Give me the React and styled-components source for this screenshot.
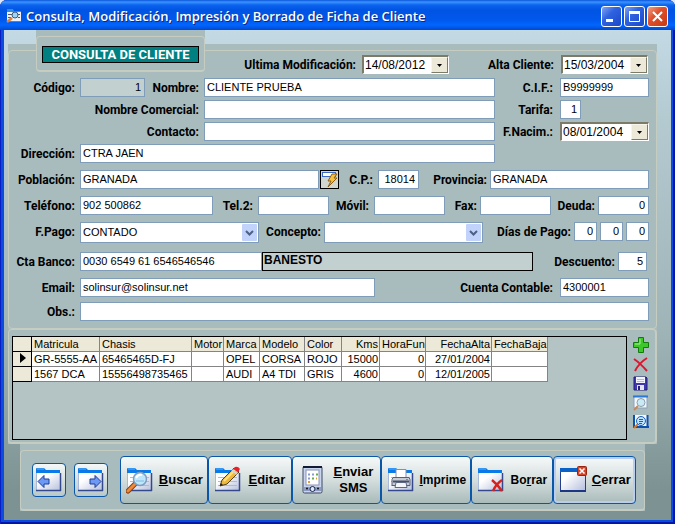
import React, { useState } from 'react';
import styled, { createGlobalStyle } from 'styled-components';

const GlobalStyle = createGlobalStyle`
  * {
    box-sizing: border-box;
  }
  body {
    margin: 0;
    background: #dfe6f5;
  }
  input, select, button {
    font: inherit;
    color: inherit;
    margin: 0;
    min-width: 0;
  }
`;

const fieldFont = "11px 'Liberation Sans', sans-serif";
const labelFont = "bold 12px Roboto, 'Liberation Sans', sans-serif";

const Window = styled.div`
  display: flex;
  flex-direction: column;
  min-height: 100vh;
  border-radius: 7px 7px 0 0;
  background: #0b4be0;
  box-shadow: inset 1px 0 #0a1fc0, inset -2px 0 #0016a8, inset 0 -2px #0016a8;
  padding: 0 4px 4px;
  font: ${fieldFont};
  color: #000;
`;

const TitleBar = styled.header`
  display: flex;
  align-items: center;
  gap: 4px;
  height: 30px;
  margin: 0 -4px;
  padding: 2px 7px 0 6px;
  border-radius: 7px 7px 0 0;
  background: linear-gradient(#0a55d8 0, #3a94ff 2px, #0c63ee 5px, #0054e3 10px, #0058ec 20px, #0066ff 25px, #0048d0 30px);
`;

const Title = styled.h1`
  flex: 1;
  margin: 0;
  font: 600 13px 'Open Sans', 'Noto Sans', sans-serif;
  color: #fff;
  text-shadow: 1px 1px #0a2a88;
  white-space: nowrap;
`;

const Controls = styled.div`
  display: flex;
  gap: 2px;
`;

const ControlButton = styled.button`
  width: 21px;
  height: 21px;
  padding: 0;
  border: 1px solid #fff;
  border-radius: 3px;
  background: ${(props) => (props.$close
    ? 'linear-gradient(135deg, #f0a088, #e0502c 40%, #c83a12)'
    : 'linear-gradient(135deg, #7fa4f4, #2f62e0 40%, #1c48c8)')};

  svg {
    display: block;
  }
`;

const Client = styled.main`
  flex: 1;
  padding: 0 14px 9px 4px;
  background: linear-gradient(#c3dae5 0, #b4cad1 90px, #9fb4b7 300px, #7d9393 460px);
`;

const Panel = styled.section`
  background: #a9bcbd;
  margin-top: ${(props) => props.$top || 0}px;
  padding-top: ${(props) => (props.$flush ? 0 : 6)}px;
`;

const Frame = styled.div`
  border: 1px solid #c6ccc0;
  border-radius: 4px;
`;

const FormFrame = styled(Frame)`
  padding: 0 7px 6px 1px;
`;

const Row = styled.div`
  display: grid;
  grid-template-columns: ${(props) => props.$cols};
  align-items: start;
  margin-top: ${(props) => props.$gap || 3}px;
`;

const TitleFrame = styled.div`
  background: #a9bcbd;
  margin: -25px 0 0 26px;
  padding-top: 6px;
`;

const TitleInner = styled(Frame)`
  border-width: 1px 1px 2px;
  padding: 9px 5px 7px;
`;

const Heading = styled.h2`
  margin: 0;
  border: 1px solid #000;
  background: #008080;
  color: #fff;
  font: ${labelFont};
  font-size: 13px;
  line-height: 15px;
  text-align: center;
  white-space: nowrap;
`;

const Label = styled.label`
  font: ${labelFont};
  line-height: 20px;
  text-align: right;
  white-space: nowrap;
  padding-right: ${(props) => props.$pad || 5}px;
`;

const Field = styled.input`
  width: 100%;
  height: 19px;
  border: 1px solid #7f9db9;
  background: ${(props) => (props.readOnly ? '#c3d0d0' : '#fff')};
  padding: 0 3px 1px 2px;
  text-align: ${(props) => (props.$right ? 'right' : 'left')};
  outline: none;
`;

const BankName = styled(Field)`
  border-color: #000;
  padding: 0 2px 3px 1px;
  font: bold 12px 'Liberation Sans', sans-serif;
`;

const DateBox = styled.div`
  display: flex;
  height: 19px;
  border: 1px solid #fff;
  border-top: 2px solid #7c7a68;
  border-left: 2px solid #7c7a68;
  background: #fff;
  font-size: 12px;

  input {
    flex: 1;
    width: 0;
    border: 0;
    padding: 0 1px;
    background: none;
    outline: none;
  }

  button {
    width: 17px;
    padding: 0;
    border: 1px solid #f8f5ea;
    border-right-color: #7c7a68;
    border-bottom-color: #7c7a68;
    background: #ece9d8;
  }

  svg {
    display: block;
    margin: auto;
  }
`;

const SelectBox = styled.div`
  display: flex;
  position: relative;
  height: 21px;

  select {
    appearance: none;
    width: 100%;
    border: 1px solid #7f9db9;
    border-radius: 0;
    background: #fff;
    padding: 0 20px 1px 2px;
    outline: none;
  }

  svg {
    position: absolute;
    right: 2px;
    top: 2px;
    pointer-events: none;
  }
`;

const PickButton = styled.button`
  width: 19px;
  height: 19px;
  margin-left: 1px;
  padding: 0;
  border: 1px solid #000;
  background: #c8ccc0;

  svg {
    display: block;
  }
`;

const DayCell = styled.div`
  display: flex;
  padding-right: 3px;
`;

const GridFrame = styled(Frame)`
  display: flex;
  gap: 5px;
  padding: 6px 5px 2px 3px;
  border-width: 1px 2px 2px 1px;
`;

const GridBox = styled.div`
  flex: 1;
  height: 104px;
  border: 1px solid #000;
  background: #b4c3c3;
  overflow: hidden;
`;

const Table = styled.table`
  border-collapse: collapse;
  table-layout: fixed;
  width: 535px;
  margin: -1px 0 0 -1px;
  line-height: 14px;

  th, td {
    height: 15px;
    padding: 0 1px 0 2px;
    border: 1px solid #848484;
    font-weight: normal;
    white-space: nowrap;
  }
  td {
    background: #fff;
  }
  thead th, th:first-child {
    background: #ece9d8;
  }
  th:first-child {
    border: 1px solid #000;
  }
`;

const Th = styled.th`
  text-align: ${(props) => (props.$right ? 'right' : 'left')};
`;

const Td = styled.td`
  text-align: ${(props) => (props.$right ? 'right' : 'left')};
`;

const SideTools = styled.div`
  display: flex;
  flex-direction: column;
  gap: 3px;
  width: 18px;

  button {
    border: 0;
    padding: 0;
    background: none;
  }
  svg {
    display: block;
  }
`;

const ToolPanel = styled(Panel)`
  margin: 0 12px;
`;

const ToolFrame = styled(Frame)`
  display: flex;
  align-items: center;
  padding: 5px 8px 5px 11px;
  border-width: 1px 1px 2px;
`;

const NavButton = styled.button`
  flex: none;
  width: 34px;
  height: 34px;
  margin-right: 8px;
  padding: 0 0 0 2px;
  border: 1px solid #0a56a8;
  border-radius: 4px;
  background: linear-gradient(#f4f7f7, #b9c8c8);

  svg {
    display: block;
  }
`;

const Actions = styled.div`
  display: flex;
  flex: 1;
  margin-left: 4px;
`;

const ActionButton = styled.button`
  display: flex;
  flex: ${(props) => props.$grow} 1 0;
  align-items: center;
  gap: 4px;
  height: 48px;
  padding: 0 3px 0 5px;
  border: 1px solid #0a56a8;
  border-radius: 4px;
  background: linear-gradient(#f6f9f9, #d4dedd 50%, #a9bbba);
  box-shadow: ${(props) => (props.$active ? 'inset 0 0 0 2px #b8cdf0' : 'none')};
  font: bold ${(props) => (props.$small ? 12 : 13)}px 'Liberation Sans', sans-serif;
  line-height: 16px;

  svg {
    flex: none;
  }
  span {
    flex: 1;
    text-align: center;
  }
`;

const Triangle = () => (
  <svg width="5" height="3" viewBox="0 0 5 3"><path d="M0 0h5L2.500 3z" fill="#000" /></svg>
);

const Chevron = () => (
  <svg width="15" height="17" viewBox="0 0 15 17">
    <rect width="15" height="17" rx="1" fill="#c1d2fb" />
    <path d="M4 7l3.500 3.500L11 7" fill="none" stroke="#4d6185" strokeWidth="2" />
  </svg>
);

const Paper = () => (
  <>
    <path d="M1 2q0-1 1-1h7l2 2h14v5H1z" fill="#0a7ae8" />
    <path d="M2 2h7" stroke="#5fb4ff" />
    <rect x="1" y="6" width="25" height="18" fill="url(#paper)" />
    <path d="M1.500 6v17" stroke="#a9b9dc" />
    <path d="M1 23.500h25M25.500 6v18" stroke="#34488e" strokeWidth="1.500" />
  </>
);

const Lines = () => (
  <path d="M4 10.500h19M4 14.500h19M4 18.500h19" stroke="#a8bbe0" />
);

const Drawing = ({ children }) => (
  <svg width="28" height="28" viewBox="0 -1 28 28">
    <defs>
      <linearGradient id="paper" x1="0" y1="0" x2="1" y2="1">
        <stop offset="0.3" stopColor="#fff" />
        <stop offset="1" stopColor="#b4bedc" />
      </linearGradient>
    </defs>
    {children}
  </svg>
);

const icons = {
  prev: <><Paper /><path d="M3 14.500l6-6v3.500h5v5H9v3.500z" fill="#6d98f4" stroke="#1c3c9c" /></>,
  next: <><Paper /><path d="M24 14.500l-6-6v3.500h-5v5h5v3.500z" fill="#6d98f4" stroke="#1c3c9c" /></>,
  search: (
    <>
      <Paper /><Lines />
      <path d="M9 17l-7 7" stroke="#8a3c10" strokeWidth="5" strokeLinecap="round" />
      <path d="M9 17l-7 7" stroke="#ef8a3a" strokeWidth="3" strokeLinecap="round" />
      <circle cx="14" cy="12" r="6.500" fill="#c0e6fa" stroke="#7c9fc0" strokeWidth="1.500" />
      <path d="M10 11q2-4 6-3" fill="none" stroke="#fff" strokeWidth="2" />
      <path d="M10 14h8" stroke="#7fbce8" />
    </>
  ),
  edit: (
    <>
      <Paper /><Lines />
      <path d="M6 19l2-6L20 1l5 4-12 12z" fill="#f0b838" stroke="#50401c" />
      <path d="M10 14L21 3" stroke="#ffe08a" strokeWidth="2" />
      <path d="M19 2l2-2q3-1 5 2l-2 3z" fill="#e8202c" />
      <path d="M18 3l5 4" stroke="#d0d4dc" strokeWidth="2" />
      <path d="M6 19l1-3 2 2z" fill="#222" />
    </>
  ),
  phone: (
    <>
      <rect x="5" y="-.5" width="19" height="26.500" rx="1.500" fill="#c9d4ee" stroke="#3c4868" />
      <path d="M5 0h19" stroke="#111c34" strokeWidth="2" />
      <rect x="8" y="3" width="13" height="15" fill="#fff" stroke="#8894b8" />
      <path d="M10 7.500h2m2 0h2M10 11.500h2" stroke="#8a9ad0" strokeWidth="2" />
      <path d="M18 7.500h2M14 11.500h2" stroke="#5fae50" strokeWidth="2" />
      <path d="M18 11.500h1M10 15h2" stroke="#e0a030" strokeWidth="2" />
      <path d="M6 20h17v4H6z" fill="#8c9cc4" />
      <circle cx="14.500" cy="22" r="2.500" fill="#dce6ff" stroke="#1c2848" />
      <circle cx="9" cy="21.500" r="1" fill="#111" /><circle cx="20" cy="21.500" r="1" fill="#111" />
    </>
  ),
  print: (
    <>
      <Paper /><Lines />
      <path d="M9 2.500h10V11H9z" fill="#fff" stroke="#8890a0" />
      <path d="M6 10.500h16l1 2v6H5v-6z" fill="#c6ccd6" stroke="#566078" />
      <path d="M6 14.500h16" stroke="#485068" strokeWidth="2" />
      <path d="M9 15.500h10l1 5H8z" fill="#f4f6fa" stroke="#5c6884" />
      <rect x="19" y="12" width="2" height="1" fill="#3cc040" />
    </>
  ),
  remove: (
    <>
      <Paper />
      <path d="M15 13q5 4 10 11M25 13q-6 4-9 11" fill="none" stroke="#d8201c" strokeWidth="2.500" />
    </>
  ),
  close: (
    <>
      <rect x="1.500" y="2" width="25" height="22" fill="url(#paper)" stroke="#233f94" />
      <path d="M1 1h26v4H1z" fill="#0a62c8" />
      <path d="M1 24h26" stroke="#1c3884" strokeWidth="2" />
      <rect x="18.500" y="-.5" width="9" height="9" rx="1" fill="#d84428" stroke="#982410" />
      <path d="M20.500 1.500l5 5m0-5l-5 5" stroke="#fff" strokeWidth="1.500" />
    </>
  ),
};

const actions = [
  { icon: 'search', key: 'B', rest: 'uscar', grow: 88 },
  { icon: 'edit', key: 'E', rest: 'ditar', grow: 84 },
  { icon: 'phone', key: 'E', rest: 'nviar', second: 'SMS', grow: 89 },
  { icon: 'print', key: 'I', rest: 'mprime', grow: 91, small: true },
  { icon: 'remove', pre: 'Bo', key: 'r', rest: 'rar', grow: 81, small: true },
  { icon: 'close', key: 'C', rest: 'errar', grow: 83, active: true },
];

const columns = [
  { name: 'Matricula', width: 68 },
  { name: 'Chasis', width: 92 },
  { name: 'Motor', width: 32 },
  { name: 'Marca', width: 36 },
  { name: 'Modelo', width: 45 },
  { name: 'Color', width: 37 },
  { name: 'Kms', width: 38, right: true },
  { name: 'HoraFun', width: 46, right: true },
  { name: 'FechaAlta', width: 66, right: true },
  { name: 'FechaBaja', width: 56, right: true },
];

const vehicles = [
  ['GR-5555-AA', '65465465D-FJ', '', 'OPEL', 'CORSA', 'ROJO', '15000', '0', '27/01/2004', ''],
  ['1567 DCA', '15556498735465', '', 'AUDI', 'A4 TDI', 'GRIS', '4600', '0', '12/01/2005', ''],
];

function DateField({ id, value }) {
  return (
    <DateBox>
      <input id={id} defaultValue={value} />
      <button type="button" aria-label="Abrir calendario"><Triangle /></button>
    </DateBox>
  );
}

function Combo({ id, options }) {
  return (
    <SelectBox>
      <select id={id}>
        {options.map((option) => <option key={option}>{option}</option>)}
      </select>
      <Chevron />
    </SelectBox>
  );
}

function ClientForm() {
  return (
    <Panel $top={14}>
      <FormFrame>
        <Row $gap={4} $cols="195px 1fr 87px 112px 87px 1px">
          <TitleFrame>
            <TitleInner><Heading>CONSULTA DE CLIENTE</Heading></TitleInner>
          </TitleFrame>
          <Label $pad={6} htmlFor="modificacion">Ultima Modificación:</Label>
          <DateField id="modificacion" value="14/08/2012" />
          <Label $pad={7} htmlFor="alta">Alta Cliente:</Label>
          <DateField id="alta" value="15/03/2004" />
        </Row>
        <Row $cols="70px 65px 59px 1fr 65px 89px">
          <Label htmlFor="codigo">Código:</Label>
          <Field id="codigo" defaultValue="1" readOnly $right />
          <Label htmlFor="nombre">Nombre:</Label>
          <Field id="nombre" defaultValue="CLIENTE PRUEBA" />
          <Label $pad={7} htmlFor="cif">C.I.F.:</Label>
          <Field id="cif" defaultValue="B9999999" />
        </Row>
        <Row $gap={2} $cols="194px 1fr 65px 21px 68px">
          <Label htmlFor="comercial">Nombre Comercial:</Label>
          <Field id="comercial" />
          <Label $pad={7} htmlFor="tarifa">Tarifa:</Label>
          <Field id="tarifa" defaultValue="1" $right />
        </Row>
        <Row $gap={2} $cols="194px 1fr 65px 89px">
          <Label htmlFor="contacto">Contacto:</Label>
          <Field id="contacto" />
          <Label $pad={7} htmlFor="nacimiento">F.Nacim.:</Label>
          <DateField id="nacimiento" value="08/01/2004" />
        </Row>
        <Row $gap={2} $cols="70px 1fr 154px">
          <Label htmlFor="direccion">Dirección:</Label>
          <Field id="direccion" defaultValue="CTRA JAEN" />
        </Row>
        <Row $gap={6} $cols="70px 1fr 20px 39px 41px 71px 159px">
          <Label htmlFor="poblacion">Población:</Label>
          <Field id="poblacion" defaultValue="GRANADA" />
          <PickButton type="button" aria-label="Elegir población">
            <svg width="17" height="17" viewBox="0 0 17 17">
              <rect x="0" y="0" width="17" height="17" fill="#d2d8d0" />
              <rect x="1.500" y="1.500" width="13" height="4" fill="#fff" stroke="#3c68c8" />
              <path d="M11 3h5l-3 4h3l-9 9 3-6H7z" fill="#f8c040" stroke="#8c5c14" />
            </svg>
          </PickButton>
          <Label htmlFor="cp">C.P.:</Label>
          <Field id="cp" defaultValue="18014" $right />
          <Label $pad={3} htmlFor="provincia">Provincia:</Label>
          <Field id="provincia" defaultValue="GRANADA" />
        </Row>
        <Row $gap={6} $cols="70px 133fr 45px 71fr 45px 71fr 35px 71fr 47px 51fr">
          <Label htmlFor="telefono">Teléfono:</Label>
          <Field id="telefono" defaultValue="902 500862" />
          <Label htmlFor="tel2">Tel.2:</Label>
          <Field id="tel2" />
          <Label htmlFor="movil">Móvil:</Label>
          <Field id="movil" />
          <Label $pad={3} htmlFor="fax">Fax:</Label>
          <Field id="fax" />
          <Label $pad={3} htmlFor="deuda">Deuda:</Label>
          <Field id="deuda" defaultValue="0" $right />
        </Row>
        <Row $gap={6} $cols="70px 179fr 65px 159fr 91px 26px 26px 23px">
          <Label htmlFor="pago">F.Pago:</Label>
          <Combo id="pago" options={['CONTADO']} />
          <Label $pad={3} htmlFor="concepto">Concepto:</Label>
          <Combo id="concepto" options={['']} />
          <Label $pad={3} htmlFor="dia1">Días de Pago:</Label>
          <DayCell><Field id="dia1" defaultValue="0" $right /></DayCell>
          <DayCell><Field aria-label="Segundo día de pago" defaultValue="0" $right /></DayCell>
          <Field aria-label="Tercer día de pago" defaultValue="0" $right />
        </Row>
        <Row $gap={9} $cols="70px 182fr 271fr 85px 29px 2px">
          <Label htmlFor="banco">Cta Banco:</Label>
          <Field id="banco" defaultValue="0030 6549 61 6546546546" />
          <BankName aria-label="Banco" defaultValue="BANESTO" readOnly />
          <Label $pad={3} htmlFor="descuento">Descuento:</Label>
          <Field id="descuento" defaultValue="5" $right />
        </Row>
        <Row $gap={6} $cols="70px 1fr 185px 89px">
          <Label htmlFor="email">Email:</Label>
          <Field id="email" defaultValue="solinsur@solinsur.net" />
          <Label $pad={7} htmlFor="cuenta">Cuenta Contable:</Label>
          <Field id="cuenta" defaultValue="4300001" />
        </Row>
        <Row $gap={4} $cols="70px 1fr">
          <Label htmlFor="obs">Obs.:</Label>
          <Field id="obs" />
        </Row>
      </FormFrame>
    </Panel>
  );
}

function Vehicles() {
  const [current, setCurrent] = useState(0);

  return (
    <Panel $flush>
      <GridFrame>
        <GridBox>
          <Table>
            <colgroup>
              <col width="19" />
              {columns.map((column) => <col key={column.name} width={column.width} />)}
            </colgroup>
            <thead>
              <tr>
                <th aria-label="Fila actual" />
                {columns.map((column) => (
                  <Th key={column.name} $right={column.right}>{column.name}</Th>
                ))}
              </tr>
            </thead>
            <tbody>
              {vehicles.map((vehicle, index) => (
                <tr key={vehicle[0]} onClick={() => setCurrent(index)}>
                  <th>
                    {index === current && (
                      <svg width="14" height="10" viewBox="0 0 14 10"><path d="M4 0l6 5-6 5z" /></svg>
                    )}
                  </th>
                  {vehicle.map((cell, i) => (
                    <Td key={columns[i].name} $right={columns[i].right}>{cell}</Td>
                  ))}
                </tr>
              ))}
            </tbody>
          </Table>
        </GridBox>
        <SideTools>
          <button type="button" aria-label="Añadir">
            <svg width="18" height="18" viewBox="0 0 18 18">
              <path d="M6.500 1.500h5v5h5v5h-5v5h-5v-5h-5v-5h5z" fill="#3cc828" stroke="#147a10" />
              <path d="M8 3v5H3" fill="none" stroke="#a8f090" />
            </svg>
          </button>
          <button type="button" aria-label="Quitar">
            <svg width="18" height="16" viewBox="0 0 18 16">
              <path d="M2 2q6 4 13 12M15 1Q7 6 3 14" fill="none" stroke="#dc1830" strokeWidth="2" />
            </svg>
          </button>
          <button type="button" aria-label="Guardar">
            <svg width="18" height="16" viewBox="0 0 18 16">
              <path d="M2 1h12l1 1v12H2z" fill="#4038b0" stroke="#201c78" />
              <rect x="4" y="1" width="9" height="6" fill="#f4f4ff" />
              <path d="M5 3.500h7M5 5.500h7" stroke="#b8b8dc" />
              <path d="M5 9h7v5H5z" fill="#e4e4f0" />
              <path d="M6 10h2v4H6z" fill="#28207c" />
            </svg>
          </button>
          <button type="button" aria-label="Ver ficha">
            <svg width="18" height="16" viewBox="0 0 18 16">
              <rect x="2" y="1" width="13" height="12" fill="#f4f6fa" stroke="#8ca0c0" />
              <path d="M1 1.500h15" stroke="#2c78d8" strokeWidth="2" />
              <path d="M6 11l-4 4" stroke="#c08a5c" strokeWidth="2" />
              <circle cx="9" cy="7.500" r="4" fill="#c8eaf4" stroke="#88a0ac" />
            </svg>
          </button>
          <button type="button" aria-label="Buscar vehículo">
            <svg width="18" height="16" viewBox="0 0 18 16">
              <rect x="1" y="1" width="15" height="12" fill="#f4f6fa" />
              <path d="M2 1v11M1 13h16M15.500 1v12" stroke="#0c50b0" strokeWidth="2" />
              <path d="M6 10l-4 4" stroke="#d8782c" strokeWidth="2" />
              <circle cx="9" cy="7" r="4.500" fill="#bce4fc" stroke="#1c60b8" />
              <path d="M7 5.500h4M7 7.500h4M7 9.500h3" stroke="#1464b4" />
            </svg>
          </button>
        </SideTools>
      </GridFrame>
    </Panel>
  );
}

function App() {
  return (
    <Window>
      <GlobalStyle />
      <TitleBar>
        <svg width="16" height="14" viewBox="0 0 16 14">
          <path d="M1 0h6l1 2h7v11H1z" fill="#2c8ce8" />
          <rect x="1" y="3" width="14" height="9" fill="#eef0f4" />
          <path d="M2 5.500h4M2 8.500h3M12 5.500h2M12 8.500h2" stroke="#555c70" />
          <path d="M6 9l-5 4" stroke="#e08030" strokeWidth="2.500" />
          <circle cx="9" cy="6" r="3" fill="#9cd4f8" stroke="#3c5c80" />
        </svg>
        <Title>Consulta, Modificación, Impresión y Borrado de Ficha de Cliente</Title>
        <Controls>
          <ControlButton type="button" aria-label="Minimizar">
            <svg width="19" height="19" viewBox="0 0 19 19"><path d="M4 12h7v3H4z" fill="#fff" /></svg>
          </ControlButton>
          <ControlButton type="button" aria-label="Maximizar">
            <svg width="19" height="19" viewBox="0 0 19 19">
              <path d="M4.500 5v9.500h10V5" fill="none" stroke="#fff" /><path d="M4 4h11v3H4z" fill="#fff" />
            </svg>
          </ControlButton>
          <ControlButton type="button" aria-label="Cerrar ventana" $close>
            <svg width="19" height="19" viewBox="0 0 19 19"><path d="M5 5l9 9m0-9l-9 9" stroke="#fff" strokeWidth="2" /></svg>
          </ControlButton>
        </Controls>
      </TitleBar>
      <Client>
        <ClientForm />
        <Vehicles />
        <ToolPanel as="nav">
          <ToolFrame>
            <NavButton type="button" aria-label="Anterior"><Drawing>{icons.prev}</Drawing></NavButton>
            <NavButton type="button" aria-label="Siguiente"><Drawing>{icons.next}</Drawing></NavButton>
            <Actions>
              {actions.map((action) => (
                <ActionButton
                  key={action.icon}
                  type="button"
                  $grow={action.grow}
                  $small={action.small}
                  $active={action.active}
                >
                  <Drawing>{icons[action.icon]}</Drawing>
                  <span>
                    {action.pre}<u>{action.key}</u>{action.rest}
                    {action.second && <><br />{action.second}</>}
                  </span>
                </ActionButton>
              ))}
            </Actions>
          </ToolFrame>
        </ToolPanel>
      </Client>
    </Window>
  );
}

export default App;
